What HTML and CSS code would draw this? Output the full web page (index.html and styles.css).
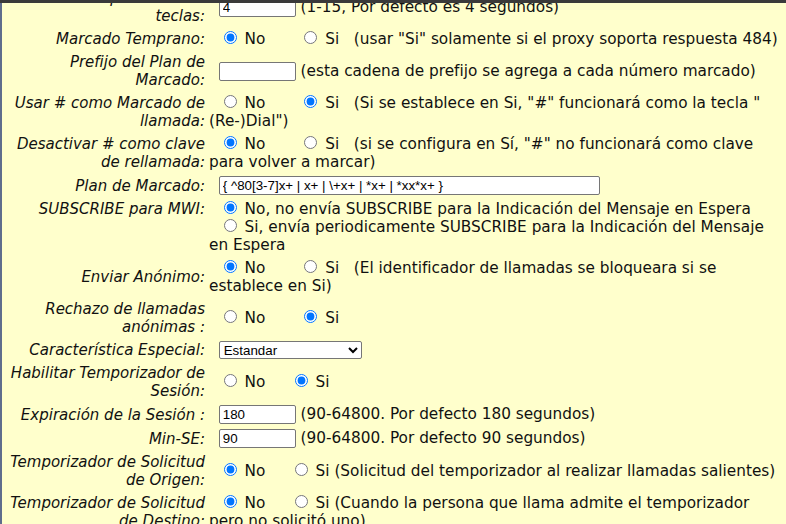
FILE: index.html
```html
<!DOCTYPE html>
<html lang="es">
<head>
<meta charset="utf-8">
<title>Configuración de cuenta</title>
<link rel="stylesheet" href="styles.css">
</head>
<body>
<div class="topbar"></div>
<div class="frame">
<table class="cfg">
<tr>
  <td class="lbl">Intervalo de pulsación de teclas:</td>
  <td class="val">&nbsp;&nbsp;<input class="txt short" type="text" value="4"> (1-15, Por defecto es 4 segundos)</td>
</tr>
<tr>
  <td class="lbl">Marcado Temprano:</td>
  <td class="val">&nbsp;&nbsp;<input type="radio" name="early" checked> No&nbsp;&nbsp;&nbsp;&nbsp;&nbsp;&nbsp;&nbsp;<input type="radio" name="early"> Si&nbsp;&nbsp;&nbsp;(usar "Si" solamente si el proxy soporta respuesta 484)</td>
</tr>
<tr>
  <td class="lbl">Prefijo del Plan de Marcado:</td>
  <td class="val">&nbsp;&nbsp;<input class="txt short" type="text" value=""> (esta cadena de prefijo se agrega a cada número marcado)</td>
</tr>
<tr>
  <td class="lbl">Usar # como Marcado de llamada:</td>
  <td class="val">&nbsp;&nbsp;<input type="radio" name="hash"> No&nbsp;&nbsp;&nbsp;&nbsp;&nbsp;&nbsp;&nbsp;<input type="radio" name="hash" checked> Si&nbsp;&nbsp;&nbsp;(Si se establece en Si, "#" funcionará como la tecla " (Re-)Dial")</td>
</tr>
<tr>
  <td class="lbl">Desactivar # como clave de rellamada:</td>
  <td class="val">&nbsp;&nbsp;<input type="radio" name="redial" checked> No&nbsp;&nbsp;&nbsp;&nbsp;&nbsp;&nbsp;&nbsp;<input type="radio" name="redial"> Si&nbsp;&nbsp;&nbsp;(si se configura en Sí, "#" no funcionará como clave para volver a marcar)</td>
</tr>
<tr>
  <td class="lbl">Plan de Marcado:</td>
  <td class="val">&nbsp;&nbsp;<input class="txt long" type="text" value="{ ^80[3-7]x+ | x+ | \+x+ | *x+ | *xx*x+ }"></td>
</tr>
<tr>
  <td class="lbl top">SUBSCRIBE para MWI:</td>
  <td class="val">&nbsp;&nbsp;<input type="radio" name="mwi" checked> No, no envía SUBSCRIBE para la Indicación del Mensaje en Espera<br>&nbsp;&nbsp;<input type="radio" name="mwi"> Si, envía periodicamente SUBSCRIBE para la Indicación del Mensaje en Espera</td>
</tr>
<tr>
  <td class="lbl">Enviar Anónimo:</td>
  <td class="val">&nbsp;&nbsp;<input type="radio" name="anon" checked> No&nbsp;&nbsp;&nbsp;&nbsp;&nbsp;&nbsp;&nbsp;<input type="radio" name="anon"> Si&nbsp;&nbsp;&nbsp;(El identificador de llamadas se bloqueara si se establece en Si)</td>
</tr>
<tr>
  <td class="lbl">Rechazo de llamadas anónimas :</td>
  <td class="val">&nbsp;&nbsp;<input type="radio" name="rej"> No&nbsp;&nbsp;&nbsp;&nbsp;&nbsp;&nbsp;&nbsp;<input type="radio" name="rej" checked> Si</td>
</tr>
<tr>
  <td class="lbl">Característica Especial:</td>
  <td class="val">&nbsp;&nbsp;<select class="sel"><option>Estandar</option></select></td>
</tr>
<tr>
  <td class="lbl">Habilitar Temporizador de Sesión:</td>
  <td class="val">&nbsp;&nbsp;<input type="radio" name="st"> No&nbsp;&nbsp;&nbsp;&nbsp;&nbsp;<input type="radio" name="st" checked> Si</td>
</tr>
<tr>
  <td class="lbl">Expiración de la Sesión :</td>
  <td class="val">&nbsp;&nbsp;<input class="txt short" type="text" value="180"> (90-64800. Por defecto 180 segundos)</td>
</tr>
<tr>
  <td class="lbl">Min-SE:</td>
  <td class="val">&nbsp;&nbsp;<input class="txt short" type="text" value="90"> (90-64800. Por defecto 90 segundos)</td>
</tr>
<tr>
  <td class="lbl">Temporizador de Solicitud de Origen:</td>
  <td class="val">&nbsp;&nbsp;<input type="radio" name="uac" checked> No&nbsp;&nbsp;&nbsp;&nbsp;&nbsp;<input type="radio" name="uac"> Si (Solicitud del temporizador al realizar llamadas salientes)</td>
</tr>
<tr>
  <td class="lbl">Temporizador de Solicitud de Destino:</td>
  <td class="val">&nbsp;&nbsp;<input type="radio" name="uas" checked> No&nbsp;&nbsp;&nbsp;&nbsp;&nbsp;<input type="radio" name="uas"> Si (Cuando la persona que llama admite el temporizador pero no solicitó uno)</td>
</tr>
</table>
</div>
</body>
</html>
```
FILE: styles.css
```css
html, body {
  margin: 0;
  padding: 0;
  background: #ffffcc;
  overflow: hidden;
}
body {
  font-family: "DejaVu Sans", sans-serif;
  font-size: 15px;
  line-height: 18px;
  color: #111;
}
.topbar {
  height: 3px;
  background: #3a3a3a;
}
.frame {
  border-left: 2px solid #5f6d8c;
  height: 521px;
  overflow: hidden;
}
.cfg {
  width: 100%;
  border-spacing: 2px;
  margin-top: -18px;
}
.cfg td {
  padding: 2px 1px 1px;
  vertical-align: middle;
}
.lbl {
  width: 200px;
  font-style: italic;
  text-align: right;
}
.cfg td.top {
  vertical-align: top;
}
.val {
  text-align: left;
  font-size: 15.3px;
}
.val input[type="radio"] {
  margin: 0 3px 0 5px;
  width: 13px;
  height: 13px;
}
.txt {
  font-family: "Liberation Sans", Arial, sans-serif;
  font-size: 13.33px;
  height: 19px;
  box-sizing: border-box;
  border: 1px solid #767676;
  border-radius: 2px;
  padding: 0 3px;
  margin: 0;
  background: #fff;
  color: #000;
}
.short {
  width: 77px;
}
.long {
  width: 381px;
}
.sel {
  font-family: "Liberation Sans", Arial, sans-serif;
  font-size: 13.33px;
  width: 143px;
  height: 18px;
  margin: 0;
  background: #fff;
  color: #000;
  border: 1px solid #767676;
  border-radius: 2px;
}
```
